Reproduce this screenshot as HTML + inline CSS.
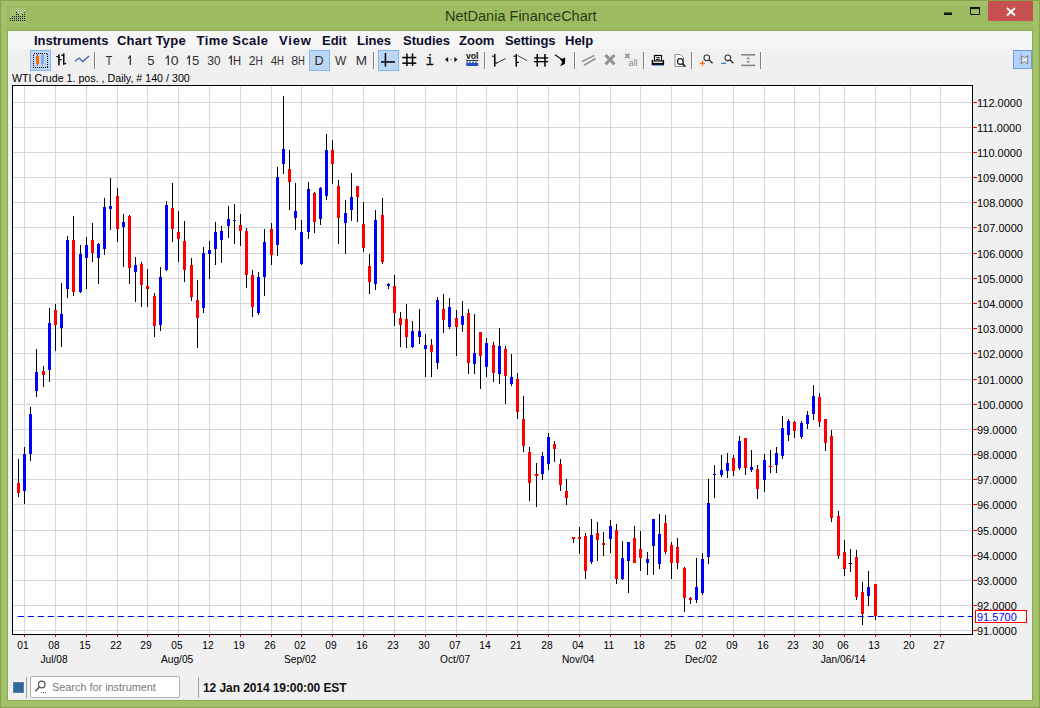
<!DOCTYPE html>
<html><head><meta charset="utf-8"><title>NetDania FinanceChart</title>
<style>
*{box-sizing:border-box;margin:0;padding:0}
html,body{width:1040px;height:708px;overflow:hidden}
body{background:#9dbb61;font-family:"Liberation Sans",sans-serif;position:relative}
.abs{position:absolute}
#win{position:absolute;left:0;top:0;width:1040px;height:708px;background:#9dbb61}
#title{position:absolute;left:444.5px;top:5.6px;white-space:nowrap;font-size:15.5px;color:rgba(10,20,0,.82);line-height:20px;transform:scaleX(.936);transform-origin:0 0}
#content{position:absolute;left:8px;top:31px;width:1024px;height:669px;background:#f0f0f0}
#menubar{position:absolute;left:0;top:0;width:1024px;height:18px;background:#f6f6f6}
.mi{position:absolute;top:2px;margin-top:-0.5px;font-weight:bold;font-size:13px;line-height:15px;color:#0b0b2a;white-space:nowrap}
.tb{position:absolute;top:52px;height:16px;line-height:16px;font-size:13px;color:#2a2a2a;text-align:center;width:21px;white-space:nowrap}
.tb span{display:inline-block;transform:scaleX(.9)}
.sel{position:absolute;top:50px;height:21px;width:21px;background:#bbd7f5;border:1px solid #84b5ec}
.sep{position:absolute;top:52px;height:17px;width:1px;background:#808080;box-shadow:1px 0 0 rgba(255,255,255,.7)}
#lbl{position:absolute;left:12px;top:72px;font-size:11.5px;line-height:13px;transform:scaleX(.928);transform-origin:0 0;color:#000;white-space:nowrap}
svg text.tbt{font-family:"Liberation Sans",sans-serif;font-size:13.6px;fill:#303030}
svg path.tbp{fill:#303030}
svg text.ax{font-family:"Liberation Sans",sans-serif;font-size:11px;fill:#000}
svg text.bx{font-size:10.2px}
#chart{position:absolute;left:0;top:0}
#icons{position:absolute;left:0;top:0}
#search{position:absolute;left:30px;top:676px;width:150px;height:22px;background:#fff;border:1px solid #b4b4b4;border-radius:2px}
#search span{position:absolute;left:20.5px;top:3px;font-size:11.5px;line-height:14px;color:#7a7a7a;white-space:nowrap;transform:scaleX(.945);transform-origin:0 0}
#dt{position:absolute;left:203px;top:680.5px;letter-spacing:-.08px;font-size:12px;line-height:14px;font-weight:bold;color:#111;white-space:nowrap}
</style></head><body>
<div id="win"></div>
<svg class="abs" style="left:0;top:0" width="1040" height="708" viewBox="0 0 1040 708"><rect x="0.5" y="0.5" width="1039" height="707" fill="none" stroke="#86a352" stroke-width="1"/>
<path d="M1 1H1039V707H1Z M7 6H1033V701H7Z" fill="#a3c169" fill-rule="evenodd"/><path d="M7 6H1033V31H7Z" fill="#9dbb61"/>
<rect x="7.5" y="30.5" width="1025" height="670" fill="none" stroke="#8dab57" stroke-width="1"/>
</svg>
<div id="title">NetDania FinanceChart</div>
<div id="content"><div id="menubar"></div></div>
<!-- menu -->
<div class="mi" style="left:34px;top:33px">Instruments</div>
<div class="mi" style="left:117px;top:33px;letter-spacing:.19px">Chart Type</div>
<div class="mi" style="left:196.5px;top:33px;letter-spacing:.42px">Time Scale</div>
<div class="mi" style="left:279px;top:33px;letter-spacing:.8px">View</div>
<div class="mi" style="left:322px;top:33px">Edit</div>
<div class="mi" style="left:357px;top:33px">Lines</div>
<div class="mi" style="left:403px;top:33px">Studies</div>
<div class="mi" style="left:459px;top:33px">Zoom</div>
<div class="mi" style="left:505px;top:33px;letter-spacing:-.12px">Settings</div>
<div class="mi" style="left:565px;top:33px">Help</div>
<!-- toolbar selections -->
<div class="sel" style="left:30px"></div>
<div class="sel" style="left:309px"></div>
<div class="sel" style="left:378px"></div>
<div class="sel" style="left:1013px;width:19px;height:19px;background:#b3d4f8;border-color:#6b9fdf"></div>
<!-- toolbar text -->
<div class="sep" style="left:94px"></div>
<div class="sep" style="left:373px"></div>
<div class="sep" style="left:484px"></div>
<div class="sep" style="left:574px"></div>
<div class="sep" style="left:643px"></div>
<div class="sep" style="left:691px"></div>
<div class="sep" style="left:760px"></div>
<div id="lbl">WTI Crude 1. pos. , Daily, # 140 / 300</div>
<svg id="chart" width="1040" height="708" viewBox="0 0 1040 708" shape-rendering="crispEdges"><rect x="13" y="86" width="959" height="548" fill="#fff"/>
<rect x="13" y="102" width="959" height="1" fill="#d6d6d6"/>
<rect x="13" y="127" width="959" height="1" fill="#d6d6d6"/>
<rect x="13" y="152" width="959" height="1" fill="#d6d6d6"/>
<rect x="13" y="177" width="959" height="1" fill="#d6d6d6"/>
<rect x="13" y="202" width="959" height="1" fill="#d6d6d6"/>
<rect x="13" y="227" width="959" height="1" fill="#d6d6d6"/>
<rect x="13" y="253" width="959" height="1" fill="#d6d6d6"/>
<rect x="13" y="278" width="959" height="1" fill="#d6d6d6"/>
<rect x="13" y="303" width="959" height="1" fill="#d6d6d6"/>
<rect x="13" y="328" width="959" height="1" fill="#d6d6d6"/>
<rect x="13" y="353" width="959" height="1" fill="#d6d6d6"/>
<rect x="13" y="379" width="959" height="1" fill="#d6d6d6"/>
<rect x="13" y="404" width="959" height="1" fill="#d6d6d6"/>
<rect x="13" y="429" width="959" height="1" fill="#d6d6d6"/>
<rect x="13" y="454" width="959" height="1" fill="#d6d6d6"/>
<rect x="13" y="479" width="959" height="1" fill="#d6d6d6"/>
<rect x="13" y="504" width="959" height="1" fill="#d6d6d6"/>
<rect x="13" y="530" width="959" height="1" fill="#d6d6d6"/>
<rect x="13" y="555" width="959" height="1" fill="#d6d6d6"/>
<rect x="13" y="580" width="959" height="1" fill="#d6d6d6"/>
<rect x="13" y="605" width="959" height="1" fill="#d6d6d6"/>
<rect x="13" y="630" width="959" height="1" fill="#d6d6d6"/>
<rect x="24" y="86" width="1" height="548" fill="#d6d6d6"/>
<rect x="55" y="86" width="1" height="548" fill="#d6d6d6"/>
<rect x="86" y="86" width="1" height="548" fill="#d6d6d6"/>
<rect x="117" y="86" width="1" height="548" fill="#d6d6d6"/>
<rect x="147" y="86" width="1" height="548" fill="#d6d6d6"/>
<rect x="178" y="86" width="1" height="548" fill="#d6d6d6"/>
<rect x="209" y="86" width="1" height="548" fill="#d6d6d6"/>
<rect x="240" y="86" width="1" height="548" fill="#d6d6d6"/>
<rect x="271" y="86" width="1" height="548" fill="#d6d6d6"/>
<rect x="301" y="86" width="1" height="548" fill="#d6d6d6"/>
<rect x="332" y="86" width="1" height="548" fill="#d6d6d6"/>
<rect x="363" y="86" width="1" height="548" fill="#d6d6d6"/>
<rect x="394" y="86" width="1" height="548" fill="#d6d6d6"/>
<rect x="425" y="86" width="1" height="548" fill="#d6d6d6"/>
<rect x="456" y="86" width="1" height="548" fill="#d6d6d6"/>
<rect x="486" y="86" width="1" height="548" fill="#d6d6d6"/>
<rect x="517" y="86" width="1" height="548" fill="#d6d6d6"/>
<rect x="548" y="86" width="1" height="548" fill="#d6d6d6"/>
<rect x="579" y="86" width="1" height="548" fill="#d6d6d6"/>
<rect x="610" y="86" width="1" height="548" fill="#d6d6d6"/>
<rect x="640" y="86" width="1" height="548" fill="#d6d6d6"/>
<rect x="671" y="86" width="1" height="548" fill="#d6d6d6"/>
<rect x="702" y="86" width="1" height="548" fill="#d6d6d6"/>
<rect x="733" y="86" width="1" height="548" fill="#d6d6d6"/>
<rect x="764" y="86" width="1" height="548" fill="#d6d6d6"/>
<rect x="794" y="86" width="1" height="548" fill="#d6d6d6"/>
<rect x="819" y="86" width="1" height="548" fill="#d6d6d6"/>
<rect x="844" y="86" width="1" height="548" fill="#d6d6d6"/>
<rect x="875" y="86" width="1" height="548" fill="#d6d6d6"/>
<rect x="910" y="86" width="1" height="548" fill="#d6d6d6"/>
<rect x="940" y="86" width="1" height="548" fill="#d6d6d6"/>
<g shape-rendering="auto"><rect x="17.70" y="616" width="6.20" height="1" fill="#0000ff"/><rect x="27.70" y="616" width="6.20" height="1" fill="#0000ff"/><rect x="37.70" y="616" width="6.20" height="1" fill="#0000ff"/><rect x="47.70" y="616" width="6.20" height="1" fill="#0000ff"/><rect x="57.70" y="616" width="6.20" height="1" fill="#0000ff"/><rect x="67.70" y="616" width="6.20" height="1" fill="#0000ff"/><rect x="77.70" y="616" width="6.20" height="1" fill="#0000ff"/><rect x="87.70" y="616" width="6.20" height="1" fill="#0000ff"/><rect x="97.70" y="616" width="6.20" height="1" fill="#0000ff"/><rect x="107.70" y="616" width="6.20" height="1" fill="#0000ff"/><rect x="117.70" y="616" width="6.20" height="1" fill="#0000ff"/><rect x="127.70" y="616" width="6.20" height="1" fill="#0000ff"/><rect x="137.70" y="616" width="6.20" height="1" fill="#0000ff"/><rect x="147.70" y="616" width="6.20" height="1" fill="#0000ff"/><rect x="157.70" y="616" width="6.20" height="1" fill="#0000ff"/><rect x="167.70" y="616" width="6.20" height="1" fill="#0000ff"/><rect x="177.70" y="616" width="6.20" height="1" fill="#0000ff"/><rect x="187.70" y="616" width="6.20" height="1" fill="#0000ff"/><rect x="197.70" y="616" width="6.20" height="1" fill="#0000ff"/><rect x="207.70" y="616" width="6.20" height="1" fill="#0000ff"/><rect x="217.70" y="616" width="6.20" height="1" fill="#0000ff"/><rect x="227.70" y="616" width="6.20" height="1" fill="#0000ff"/><rect x="237.70" y="616" width="6.20" height="1" fill="#0000ff"/><rect x="247.70" y="616" width="6.20" height="1" fill="#0000ff"/><rect x="257.70" y="616" width="6.20" height="1" fill="#0000ff"/><rect x="267.70" y="616" width="6.20" height="1" fill="#0000ff"/><rect x="277.70" y="616" width="6.20" height="1" fill="#0000ff"/><rect x="287.70" y="616" width="6.20" height="1" fill="#0000ff"/><rect x="297.70" y="616" width="6.20" height="1" fill="#0000ff"/><rect x="307.70" y="616" width="6.20" height="1" fill="#0000ff"/><rect x="317.70" y="616" width="6.20" height="1" fill="#0000ff"/><rect x="327.70" y="616" width="6.20" height="1" fill="#0000ff"/><rect x="337.70" y="616" width="6.20" height="1" fill="#0000ff"/><rect x="347.70" y="616" width="6.20" height="1" fill="#0000ff"/><rect x="357.70" y="616" width="6.20" height="1" fill="#0000ff"/><rect x="367.70" y="616" width="6.20" height="1" fill="#0000ff"/><rect x="377.70" y="616" width="6.20" height="1" fill="#0000ff"/><rect x="387.70" y="616" width="6.20" height="1" fill="#0000ff"/><rect x="397.70" y="616" width="6.20" height="1" fill="#0000ff"/><rect x="407.70" y="616" width="6.20" height="1" fill="#0000ff"/><rect x="417.70" y="616" width="6.20" height="1" fill="#0000ff"/><rect x="427.70" y="616" width="6.20" height="1" fill="#0000ff"/><rect x="437.70" y="616" width="6.20" height="1" fill="#0000ff"/><rect x="447.70" y="616" width="6.20" height="1" fill="#0000ff"/><rect x="457.70" y="616" width="6.20" height="1" fill="#0000ff"/><rect x="467.70" y="616" width="6.20" height="1" fill="#0000ff"/><rect x="477.70" y="616" width="6.20" height="1" fill="#0000ff"/><rect x="487.70" y="616" width="6.20" height="1" fill="#0000ff"/><rect x="497.70" y="616" width="6.20" height="1" fill="#0000ff"/><rect x="507.70" y="616" width="6.20" height="1" fill="#0000ff"/><rect x="517.70" y="616" width="6.20" height="1" fill="#0000ff"/><rect x="527.70" y="616" width="6.20" height="1" fill="#0000ff"/><rect x="537.70" y="616" width="6.20" height="1" fill="#0000ff"/><rect x="547.70" y="616" width="6.20" height="1" fill="#0000ff"/><rect x="557.70" y="616" width="6.20" height="1" fill="#0000ff"/><rect x="567.70" y="616" width="6.20" height="1" fill="#0000ff"/><rect x="577.70" y="616" width="6.20" height="1" fill="#0000ff"/><rect x="587.70" y="616" width="6.20" height="1" fill="#0000ff"/><rect x="597.70" y="616" width="6.20" height="1" fill="#0000ff"/><rect x="607.70" y="616" width="6.20" height="1" fill="#0000ff"/><rect x="617.70" y="616" width="6.20" height="1" fill="#0000ff"/><rect x="627.70" y="616" width="6.20" height="1" fill="#0000ff"/><rect x="637.70" y="616" width="6.20" height="1" fill="#0000ff"/><rect x="647.70" y="616" width="6.20" height="1" fill="#0000ff"/><rect x="657.70" y="616" width="6.20" height="1" fill="#0000ff"/><rect x="667.70" y="616" width="6.20" height="1" fill="#0000ff"/><rect x="677.70" y="616" width="6.20" height="1" fill="#0000ff"/><rect x="687.70" y="616" width="6.20" height="1" fill="#0000ff"/><rect x="697.70" y="616" width="6.20" height="1" fill="#0000ff"/><rect x="707.70" y="616" width="6.20" height="1" fill="#0000ff"/><rect x="717.70" y="616" width="6.20" height="1" fill="#0000ff"/><rect x="727.70" y="616" width="6.20" height="1" fill="#0000ff"/><rect x="737.70" y="616" width="6.20" height="1" fill="#0000ff"/><rect x="747.70" y="616" width="6.20" height="1" fill="#0000ff"/><rect x="757.70" y="616" width="6.20" height="1" fill="#0000ff"/><rect x="767.70" y="616" width="6.20" height="1" fill="#0000ff"/><rect x="777.70" y="616" width="6.20" height="1" fill="#0000ff"/><rect x="787.70" y="616" width="6.20" height="1" fill="#0000ff"/><rect x="797.70" y="616" width="6.20" height="1" fill="#0000ff"/><rect x="807.70" y="616" width="6.20" height="1" fill="#0000ff"/><rect x="817.70" y="616" width="6.20" height="1" fill="#0000ff"/><rect x="827.70" y="616" width="6.20" height="1" fill="#0000ff"/><rect x="837.70" y="616" width="6.20" height="1" fill="#0000ff"/><rect x="847.70" y="616" width="6.20" height="1" fill="#0000ff"/><rect x="857.70" y="616" width="6.20" height="1" fill="#0000ff"/><rect x="867.70" y="616" width="6.20" height="1" fill="#0000ff"/><rect x="877.70" y="616" width="6.20" height="1" fill="#0000ff"/><rect x="887.70" y="616" width="6.20" height="1" fill="#0000ff"/><rect x="897.70" y="616" width="6.20" height="1" fill="#0000ff"/><rect x="907.70" y="616" width="6.20" height="1" fill="#0000ff"/><rect x="917.70" y="616" width="6.20" height="1" fill="#0000ff"/><rect x="927.70" y="616" width="6.20" height="1" fill="#0000ff"/><rect x="937.70" y="616" width="6.20" height="1" fill="#0000ff"/><rect x="947.70" y="616" width="6.20" height="1" fill="#0000ff"/><rect x="957.70" y="616" width="6.20" height="1" fill="#0000ff"/><rect x="967.70" y="616" width="4.30" height="1" fill="#0000ff"/></g>
<rect x="18" y="459" width="1" height="38" fill="#000"/>
<rect x="17" y="483" width="3" height="10" fill="#ff0000"/>
<rect x="24" y="447" width="1" height="57" fill="#000"/>
<rect x="23" y="454" width="3" height="37" fill="#0000ff"/>
<rect x="30" y="407" width="1" height="54" fill="#000"/>
<rect x="29" y="414" width="3" height="40" fill="#0000ff"/>
<rect x="36" y="349" width="1" height="48" fill="#000"/>
<rect x="35" y="372" width="3" height="19" fill="#0000ff"/>
<rect x="43" y="366" width="1" height="21" fill="#000"/>
<rect x="42" y="371" width="3" height="4" fill="#ff0000"/>
<rect x="49" y="308" width="1" height="74" fill="#000"/>
<rect x="48" y="323" width="3" height="47" fill="#0000ff"/>
<rect x="55" y="304" width="1" height="47" fill="#000"/>
<rect x="54" y="310" width="3" height="15" fill="#ff0000"/>
<rect x="61" y="283" width="1" height="64" fill="#000"/>
<rect x="60" y="314" width="3" height="14" fill="#0000ff"/>
<rect x="67" y="236" width="1" height="62" fill="#000"/>
<rect x="66" y="240" width="3" height="49" fill="#0000ff"/>
<rect x="73" y="216" width="1" height="80" fill="#000"/>
<rect x="72" y="240" width="3" height="52" fill="#ff0000"/>
<rect x="80" y="245" width="1" height="48" fill="#000"/>
<rect x="79" y="254" width="3" height="38" fill="#0000ff"/>
<rect x="86" y="237" width="1" height="52" fill="#000"/>
<rect x="85" y="245" width="3" height="13" fill="#0000ff"/>
<rect x="92" y="223" width="1" height="39" fill="#000"/>
<rect x="91" y="240" width="3" height="13" fill="#ff0000"/>
<rect x="98" y="243" width="1" height="41" fill="#000"/>
<rect x="97" y="244" width="3" height="14" fill="#0000ff"/>
<rect x="104" y="198" width="1" height="57" fill="#000"/>
<rect x="103" y="207" width="3" height="42" fill="#0000ff"/>
<rect x="110" y="178" width="1" height="52" fill="#000"/>
<rect x="109" y="206" width="3" height="3" fill="#0000ff"/>
<rect x="117" y="188" width="1" height="54" fill="#000"/>
<rect x="116" y="196" width="3" height="33" fill="#ff0000"/>
<rect x="123" y="214" width="1" height="53" fill="#000"/>
<rect x="122" y="222" width="3" height="5" fill="#0000ff"/>
<rect x="129" y="215" width="1" height="69" fill="#000"/>
<rect x="128" y="216" width="3" height="52" fill="#ff0000"/>
<rect x="135" y="257" width="1" height="45" fill="#000"/>
<rect x="134" y="265" width="3" height="7" fill="#0000ff"/>
<rect x="141" y="262" width="1" height="45" fill="#000"/>
<rect x="140" y="264" width="3" height="21" fill="#ff0000"/>
<rect x="147" y="269" width="1" height="38" fill="#000"/>
<rect x="146" y="286" width="3" height="3" fill="#ff0000"/>
<rect x="154" y="293" width="1" height="44" fill="#000"/>
<rect x="153" y="296" width="3" height="30" fill="#ff0000"/>
<rect x="160" y="267" width="1" height="64" fill="#000"/>
<rect x="159" y="277" width="3" height="48" fill="#0000ff"/>
<rect x="166" y="201" width="1" height="70" fill="#000"/>
<rect x="165" y="205" width="3" height="65" fill="#0000ff"/>
<rect x="172" y="183" width="1" height="59" fill="#000"/>
<rect x="171" y="208" width="3" height="21" fill="#ff0000"/>
<rect x="178" y="211" width="1" height="51" fill="#000"/>
<rect x="177" y="232" width="3" height="7" fill="#ff0000"/>
<rect x="184" y="221" width="1" height="61" fill="#000"/>
<rect x="183" y="241" width="3" height="29" fill="#ff0000"/>
<rect x="191" y="258" width="1" height="43" fill="#000"/>
<rect x="190" y="265" width="3" height="32" fill="#ff0000"/>
<rect x="197" y="280" width="1" height="68" fill="#000"/>
<rect x="196" y="300" width="3" height="18" fill="#ff0000"/>
<rect x="203" y="247" width="1" height="66" fill="#000"/>
<rect x="202" y="253" width="3" height="55" fill="#0000ff"/>
<rect x="209" y="241" width="1" height="38" fill="#000"/>
<rect x="208" y="250" width="3" height="4" fill="#0000ff"/>
<rect x="215" y="222" width="1" height="43" fill="#000"/>
<rect x="214" y="232" width="3" height="17" fill="#0000ff"/>
<rect x="221" y="226" width="1" height="37" fill="#000"/>
<rect x="220" y="231" width="3" height="9" fill="#0000ff"/>
<rect x="228" y="206" width="1" height="32" fill="#000"/>
<rect x="227" y="219" width="3" height="7" fill="#0000ff"/>
<rect x="234" y="204" width="1" height="40" fill="#000"/>
<rect x="233" y="220" width="3" height="1" fill="#0000ff"/>
<rect x="240" y="214" width="1" height="32" fill="#000"/>
<rect x="239" y="225" width="3" height="6" fill="#ff0000"/>
<rect x="246" y="228" width="1" height="60" fill="#000"/>
<rect x="245" y="231" width="3" height="44" fill="#ff0000"/>
<rect x="252" y="270" width="1" height="47" fill="#000"/>
<rect x="251" y="275" width="3" height="32" fill="#ff0000"/>
<rect x="258" y="272" width="1" height="43" fill="#000"/>
<rect x="257" y="277" width="3" height="36" fill="#0000ff"/>
<rect x="264" y="229" width="1" height="67" fill="#000"/>
<rect x="263" y="242" width="3" height="35" fill="#0000ff"/>
<rect x="271" y="223" width="1" height="42" fill="#000"/>
<rect x="270" y="229" width="3" height="26" fill="#ff0000"/>
<rect x="277" y="167" width="1" height="89" fill="#000"/>
<rect x="276" y="177" width="3" height="68" fill="#0000ff"/>
<rect x="283" y="96" width="1" height="78" fill="#000"/>
<rect x="282" y="149" width="3" height="15" fill="#0000ff"/>
<rect x="289" y="150" width="1" height="60" fill="#000"/>
<rect x="288" y="169" width="3" height="13" fill="#ff0000"/>
<rect x="295" y="183" width="1" height="47" fill="#000"/>
<rect x="294" y="211" width="3" height="7" fill="#0000ff"/>
<rect x="301" y="220" width="1" height="45" fill="#000"/>
<rect x="300" y="232" width="3" height="32" fill="#0000ff"/>
<rect x="308" y="182" width="1" height="57" fill="#000"/>
<rect x="307" y="189" width="3" height="43" fill="#0000ff"/>
<rect x="314" y="192" width="1" height="41" fill="#000"/>
<rect x="313" y="193" width="3" height="29" fill="#ff0000"/>
<rect x="320" y="187" width="1" height="38" fill="#000"/>
<rect x="319" y="188" width="3" height="31" fill="#0000ff"/>
<rect x="326" y="134" width="1" height="66" fill="#000"/>
<rect x="325" y="150" width="3" height="46" fill="#0000ff"/>
<rect x="332" y="140" width="1" height="44" fill="#000"/>
<rect x="331" y="150" width="3" height="14" fill="#ff0000"/>
<rect x="338" y="180" width="1" height="64" fill="#000"/>
<rect x="337" y="186" width="3" height="32" fill="#ff0000"/>
<rect x="345" y="200" width="1" height="54" fill="#000"/>
<rect x="344" y="213" width="3" height="10" fill="#0000ff"/>
<rect x="351" y="173" width="1" height="48" fill="#000"/>
<rect x="350" y="197" width="3" height="13" fill="#0000ff"/>
<rect x="357" y="186" width="1" height="36" fill="#000"/>
<rect x="356" y="186" width="3" height="11" fill="#ff0000"/>
<rect x="363" y="202" width="1" height="50" fill="#000"/>
<rect x="362" y="224" width="3" height="24" fill="#ff0000"/>
<rect x="369" y="254" width="1" height="40" fill="#000"/>
<rect x="368" y="266" width="3" height="16" fill="#ff0000"/>
<rect x="375" y="210" width="1" height="80" fill="#000"/>
<rect x="374" y="220" width="3" height="64" fill="#0000ff"/>
<rect x="382" y="198" width="1" height="66" fill="#000"/>
<rect x="381" y="215" width="3" height="47" fill="#ff0000"/>
<rect x="388" y="283" width="1" height="6" fill="#000"/>
<rect x="387" y="284" width="3" height="2" fill="#0000ff"/>
<rect x="394" y="275" width="1" height="51" fill="#000"/>
<rect x="393" y="286" width="3" height="27" fill="#ff0000"/>
<rect x="400" y="312" width="1" height="35" fill="#000"/>
<rect x="399" y="318" width="3" height="7" fill="#ff0000"/>
<rect x="406" y="304" width="1" height="44" fill="#000"/>
<rect x="405" y="319" width="3" height="18" fill="#ff0000"/>
<rect x="412" y="321" width="1" height="27" fill="#000"/>
<rect x="411" y="331" width="3" height="16" fill="#0000ff"/>
<rect x="419" y="309" width="1" height="35" fill="#000"/>
<rect x="418" y="331" width="3" height="6" fill="#0000ff"/>
<rect x="425" y="334" width="1" height="43" fill="#000"/>
<rect x="424" y="345" width="3" height="4" fill="#0000ff"/>
<rect x="431" y="339" width="1" height="38" fill="#000"/>
<rect x="430" y="345" width="3" height="7" fill="#ff0000"/>
<rect x="437" y="297" width="1" height="72" fill="#000"/>
<rect x="436" y="300" width="3" height="63" fill="#0000ff"/>
<rect x="443" y="294" width="1" height="39" fill="#000"/>
<rect x="442" y="309" width="3" height="11" fill="#ff0000"/>
<rect x="449" y="298" width="1" height="31" fill="#000"/>
<rect x="448" y="307" width="3" height="20" fill="#0000ff"/>
<rect x="456" y="310" width="1" height="46" fill="#000"/>
<rect x="455" y="318" width="3" height="9" fill="#ff0000"/>
<rect x="462" y="301" width="1" height="31" fill="#000"/>
<rect x="461" y="316" width="3" height="9" fill="#0000ff"/>
<rect x="468" y="309" width="1" height="65" fill="#000"/>
<rect x="467" y="313" width="3" height="50" fill="#ff0000"/>
<rect x="474" y="314" width="1" height="60" fill="#000"/>
<rect x="473" y="353" width="3" height="11" fill="#0000ff"/>
<rect x="480" y="332" width="1" height="57" fill="#000"/>
<rect x="479" y="332" width="3" height="24" fill="#ff0000"/>
<rect x="486" y="338" width="1" height="39" fill="#000"/>
<rect x="485" y="343" width="3" height="24" fill="#0000ff"/>
<rect x="493" y="342" width="1" height="40" fill="#000"/>
<rect x="492" y="345" width="3" height="28" fill="#ff0000"/>
<rect x="499" y="328" width="1" height="56" fill="#000"/>
<rect x="498" y="346" width="3" height="28" fill="#0000ff"/>
<rect x="505" y="346" width="1" height="58" fill="#000"/>
<rect x="504" y="349" width="3" height="27" fill="#ff0000"/>
<rect x="511" y="354" width="1" height="32" fill="#000"/>
<rect x="510" y="377" width="3" height="7" fill="#0000ff"/>
<rect x="517" y="373" width="1" height="46" fill="#000"/>
<rect x="516" y="379" width="3" height="33" fill="#ff0000"/>
<rect x="523" y="396" width="1" height="56" fill="#000"/>
<rect x="522" y="419" width="3" height="27" fill="#ff0000"/>
<rect x="529" y="447" width="1" height="54" fill="#000"/>
<rect x="528" y="452" width="3" height="31" fill="#ff0000"/>
<rect x="536" y="463" width="1" height="44" fill="#000"/>
<rect x="534" y="474" width="5" height="2" fill="#ff0000" opacity=".35"/><rect x="535" y="474" width="3" height="2" fill="#ff0000"/>
<rect x="542" y="452" width="1" height="28" fill="#000"/>
<rect x="541" y="456" width="3" height="18" fill="#0000ff"/>
<rect x="548" y="433" width="1" height="37" fill="#000"/>
<rect x="547" y="437" width="3" height="27" fill="#0000ff"/>
<rect x="554" y="441" width="1" height="21" fill="#000"/>
<rect x="553" y="444" width="3" height="5" fill="#ff0000"/>
<rect x="560" y="459" width="1" height="32" fill="#000"/>
<rect x="559" y="464" width="3" height="21" fill="#ff0000"/>
<rect x="566" y="479" width="1" height="26" fill="#000"/>
<rect x="565" y="491" width="3" height="7" fill="#ff0000"/>
<rect x="573" y="537" width="1" height="6" fill="#000"/>
<rect x="572" y="537" width="3" height="2" fill="#ff0000"/>
<rect x="579" y="527" width="1" height="27" fill="#000"/>
<rect x="578" y="537" width="3" height="2" fill="#ff0000"/>
<rect x="585" y="533" width="1" height="46" fill="#000"/>
<rect x="584" y="536" width="3" height="35" fill="#ff0000"/>
<rect x="591" y="519" width="1" height="45" fill="#000"/>
<rect x="590" y="535" width="3" height="27" fill="#0000ff"/>
<rect x="597" y="522" width="1" height="39" fill="#000"/>
<rect x="596" y="533" width="3" height="7" fill="#ff0000"/>
<rect x="603" y="532" width="1" height="24" fill="#000"/>
<rect x="602" y="543" width="3" height="2" fill="#ff0000"/>
<rect x="610" y="520" width="1" height="33" fill="#000"/>
<rect x="609" y="526" width="3" height="13" fill="#0000ff"/>
<rect x="616" y="524" width="1" height="60" fill="#000"/>
<rect x="615" y="530" width="3" height="49" fill="#ff0000"/>
<rect x="622" y="541" width="1" height="39" fill="#000"/>
<rect x="621" y="558" width="3" height="21" fill="#0000ff"/>
<rect x="628" y="542" width="1" height="51" fill="#000"/>
<rect x="627" y="542" width="3" height="19" fill="#0000ff"/>
<rect x="634" y="526" width="1" height="37" fill="#000"/>
<rect x="633" y="538" width="3" height="25" fill="#ff0000"/>
<rect x="640" y="531" width="1" height="40" fill="#000"/>
<rect x="639" y="549" width="3" height="9" fill="#ff0000"/>
<rect x="647" y="552" width="1" height="23" fill="#000"/>
<rect x="646" y="559" width="3" height="4" fill="#0000ff"/>
<rect x="653" y="519" width="1" height="56" fill="#000"/>
<rect x="652" y="519" width="3" height="27" fill="#0000ff"/>
<rect x="659" y="514" width="1" height="55" fill="#000"/>
<rect x="658" y="534" width="3" height="30" fill="#0000ff"/>
<rect x="665" y="515" width="1" height="39" fill="#000"/>
<rect x="664" y="523" width="3" height="29" fill="#ff0000"/>
<rect x="671" y="542" width="1" height="37" fill="#000"/>
<rect x="670" y="545" width="3" height="18" fill="#ff0000"/>
<rect x="677" y="538" width="1" height="31" fill="#000"/>
<rect x="676" y="547" width="3" height="16" fill="#ff0000"/>
<rect x="684" y="567" width="1" height="45" fill="#000"/>
<rect x="683" y="568" width="3" height="30" fill="#ff0000"/>
<rect x="690" y="597" width="1" height="7" fill="#000"/>
<rect x="689" y="598" width="3" height="2" fill="#ff0000"/>
<rect x="696" y="558" width="1" height="45" fill="#000"/>
<rect x="695" y="587" width="3" height="13" fill="#0000ff"/>
<rect x="702" y="553" width="1" height="42" fill="#000"/>
<rect x="701" y="559" width="3" height="34" fill="#0000ff"/>
<rect x="708" y="479" width="1" height="85" fill="#000"/>
<rect x="707" y="503" width="3" height="54" fill="#0000ff"/>
<rect x="714" y="465" width="1" height="33" fill="#000"/>
<rect x="713" y="474" width="3" height="1" fill="#0000ff"/>
<rect x="721" y="455" width="1" height="22" fill="#000"/>
<rect x="720" y="470" width="3" height="5" fill="#0000ff"/>
<rect x="727" y="453" width="1" height="25" fill="#000"/>
<rect x="726" y="463" width="3" height="8" fill="#0000ff"/>
<rect x="733" y="455" width="1" height="21" fill="#000"/>
<rect x="732" y="458" width="3" height="13" fill="#ff0000"/>
<rect x="739" y="436" width="1" height="34" fill="#000"/>
<rect x="738" y="441" width="3" height="27" fill="#0000ff"/>
<rect x="745" y="438" width="1" height="37" fill="#000"/>
<rect x="744" y="438" width="3" height="30" fill="#ff0000"/>
<rect x="751" y="450" width="1" height="22" fill="#000"/>
<rect x="750" y="467" width="3" height="3" fill="#0000ff"/>
<rect x="757" y="465" width="1" height="34" fill="#000"/>
<rect x="756" y="469" width="3" height="20" fill="#ff0000"/>
<rect x="764" y="454" width="1" height="38" fill="#000"/>
<rect x="763" y="460" width="3" height="20" fill="#0000ff"/>
<rect x="770" y="450" width="1" height="23" fill="#000"/>
<rect x="768" y="466" width="5" height="1" fill="#ff0000" opacity=".35"/><rect x="769" y="466" width="3" height="1" fill="#ff0000"/>
<rect x="776" y="447" width="1" height="26" fill="#000"/>
<rect x="775" y="453" width="3" height="12" fill="#0000ff"/>
<rect x="782" y="416" width="1" height="43" fill="#000"/>
<rect x="781" y="428" width="3" height="28" fill="#0000ff"/>
<rect x="788" y="419" width="1" height="22" fill="#000"/>
<rect x="787" y="421" width="3" height="14" fill="#0000ff"/>
<rect x="794" y="421" width="1" height="17" fill="#000"/>
<rect x="793" y="422" width="3" height="9" fill="#ff0000"/>
<rect x="801" y="421" width="1" height="18" fill="#000"/>
<rect x="800" y="423" width="3" height="14" fill="#0000ff"/>
<rect x="807" y="411" width="1" height="18" fill="#000"/>
<rect x="806" y="415" width="3" height="9" fill="#0000ff"/>
<rect x="813" y="385" width="1" height="35" fill="#000"/>
<rect x="812" y="396" width="3" height="18" fill="#0000ff"/>
<rect x="819" y="393" width="1" height="34" fill="#000"/>
<rect x="818" y="397" width="3" height="25" fill="#ff0000"/>
<rect x="825" y="419" width="1" height="32" fill="#000"/>
<rect x="824" y="419" width="3" height="24" fill="#ff0000"/>
<rect x="831" y="430" width="1" height="92" fill="#000"/>
<rect x="830" y="436" width="3" height="82" fill="#ff0000"/>
<rect x="838" y="511" width="1" height="48" fill="#000"/>
<rect x="837" y="516" width="3" height="40" fill="#ff0000"/>
<rect x="844" y="540" width="1" height="36" fill="#000"/>
<rect x="843" y="552" width="3" height="17" fill="#ff0000"/>
<rect x="850" y="549" width="1" height="23" fill="#000"/>
<rect x="848" y="563" width="5" height="1" fill="#000000" opacity=".35"/><rect x="849" y="563" width="3" height="1" fill="#000000"/>
<rect x="856" y="550" width="1" height="50" fill="#000"/>
<rect x="855" y="557" width="3" height="40" fill="#ff0000"/>
<rect x="862" y="582" width="1" height="43" fill="#000"/>
<rect x="861" y="592" width="3" height="22" fill="#ff0000"/>
<rect x="868" y="571" width="1" height="35" fill="#000"/>
<rect x="867" y="587" width="3" height="9" fill="#0000ff"/>
<rect x="875" y="584" width="1" height="36" fill="#000"/>
<rect x="874" y="584" width="3" height="32" fill="#ff0000"/>
<path d="M12.5 85.5H972.5V634.5H12.5Z" fill="none" stroke="#000" stroke-width="1.25"/>
<rect x="973" y="102" width="4" height="1" fill="#ff0000"/>
<text x="977" y="106.5" class="ax">112.0000</text>
<rect x="973" y="127" width="4" height="1" fill="#ff0000"/>
<text x="977" y="131.5" class="ax">111.0000</text>
<rect x="973" y="152" width="4" height="1" fill="#ff0000"/>
<text x="977" y="156.5" class="ax">110.0000</text>
<rect x="973" y="177" width="4" height="1" fill="#ff0000"/>
<text x="977" y="181.5" class="ax">109.0000</text>
<rect x="973" y="202" width="4" height="1" fill="#ff0000"/>
<text x="977" y="206.5" class="ax">108.0000</text>
<rect x="973" y="227" width="4" height="1" fill="#ff0000"/>
<text x="977" y="231.5" class="ax">107.0000</text>
<rect x="973" y="253" width="4" height="1" fill="#ff0000"/>
<text x="977" y="257.5" class="ax">106.0000</text>
<rect x="973" y="278" width="4" height="1" fill="#ff0000"/>
<text x="977" y="282.5" class="ax">105.0000</text>
<rect x="973" y="303" width="4" height="1" fill="#ff0000"/>
<text x="977" y="307.5" class="ax">104.0000</text>
<rect x="973" y="328" width="4" height="1" fill="#ff0000"/>
<text x="977" y="332.5" class="ax">103.0000</text>
<rect x="973" y="353" width="4" height="1" fill="#ff0000"/>
<text x="977" y="357.5" class="ax">102.0000</text>
<rect x="973" y="379" width="4" height="1" fill="#ff0000"/>
<text x="977" y="383.5" class="ax">101.0000</text>
<rect x="973" y="404" width="4" height="1" fill="#ff0000"/>
<text x="977" y="408.5" class="ax">100.0000</text>
<rect x="973" y="429" width="4" height="1" fill="#ff0000"/>
<text x="977" y="433.5" class="ax">99.0000</text>
<rect x="973" y="454" width="4" height="1" fill="#ff0000"/>
<text x="977" y="458.5" class="ax">98.0000</text>
<rect x="973" y="479" width="4" height="1" fill="#ff0000"/>
<text x="977" y="483.5" class="ax">97.0000</text>
<rect x="973" y="504" width="4" height="1" fill="#ff0000"/>
<text x="977" y="508.5" class="ax">96.0000</text>
<rect x="973" y="530" width="4" height="1" fill="#ff0000"/>
<text x="977" y="534.5" class="ax">95.0000</text>
<rect x="973" y="555" width="4" height="1" fill="#ff0000"/>
<text x="977" y="559.5" class="ax">94.0000</text>
<rect x="973" y="580" width="4" height="1" fill="#ff0000"/>
<text x="977" y="584.5" class="ax">93.0000</text>
<rect x="973" y="605" width="4" height="1" fill="#ff0000"/>
<text x="977" y="609.5" class="ax">92.0000</text>
<rect x="973" y="630" width="4" height="1" fill="#ff0000"/>
<text x="977" y="634.5" class="ax">91.0000</text>
<rect x="24" y="635" width="1" height="2" fill="#ff0000"/>
<text x="22.9" y="648.6" class="ax bx" text-anchor="middle">01</text>
<rect x="55" y="635" width="1" height="2" fill="#ff0000"/>
<text x="53.9" y="648.6" class="ax bx" text-anchor="middle">08</text>
<rect x="86" y="635" width="1" height="2" fill="#ff0000"/>
<text x="84.9" y="648.6" class="ax bx" text-anchor="middle">15</text>
<rect x="117" y="635" width="1" height="2" fill="#ff0000"/>
<text x="115.9" y="648.6" class="ax bx" text-anchor="middle">22</text>
<rect x="147" y="635" width="1" height="2" fill="#ff0000"/>
<text x="145.9" y="648.6" class="ax bx" text-anchor="middle">29</text>
<rect x="178" y="635" width="1" height="2" fill="#ff0000"/>
<text x="176.9" y="648.6" class="ax bx" text-anchor="middle">05</text>
<rect x="209" y="635" width="1" height="2" fill="#ff0000"/>
<text x="207.9" y="648.6" class="ax bx" text-anchor="middle">12</text>
<rect x="240" y="635" width="1" height="2" fill="#ff0000"/>
<text x="238.9" y="648.6" class="ax bx" text-anchor="middle">19</text>
<rect x="271" y="635" width="1" height="2" fill="#ff0000"/>
<text x="269.9" y="648.6" class="ax bx" text-anchor="middle">26</text>
<rect x="301" y="635" width="1" height="2" fill="#ff0000"/>
<text x="299.9" y="648.6" class="ax bx" text-anchor="middle">02</text>
<rect x="332" y="635" width="1" height="2" fill="#ff0000"/>
<text x="330.9" y="648.6" class="ax bx" text-anchor="middle">09</text>
<rect x="363" y="635" width="1" height="2" fill="#ff0000"/>
<text x="361.9" y="648.6" class="ax bx" text-anchor="middle">16</text>
<rect x="394" y="635" width="1" height="2" fill="#ff0000"/>
<text x="392.9" y="648.6" class="ax bx" text-anchor="middle">23</text>
<rect x="425" y="635" width="1" height="2" fill="#ff0000"/>
<text x="423.9" y="648.6" class="ax bx" text-anchor="middle">30</text>
<rect x="456" y="635" width="1" height="2" fill="#ff0000"/>
<text x="454.9" y="648.6" class="ax bx" text-anchor="middle">07</text>
<rect x="486" y="635" width="1" height="2" fill="#ff0000"/>
<text x="484.9" y="648.6" class="ax bx" text-anchor="middle">14</text>
<rect x="517" y="635" width="1" height="2" fill="#ff0000"/>
<text x="515.9" y="648.6" class="ax bx" text-anchor="middle">21</text>
<rect x="548" y="635" width="1" height="2" fill="#ff0000"/>
<text x="546.9" y="648.6" class="ax bx" text-anchor="middle">28</text>
<rect x="579" y="635" width="1" height="2" fill="#ff0000"/>
<text x="577.9" y="648.6" class="ax bx" text-anchor="middle">04</text>
<rect x="610" y="635" width="1" height="2" fill="#ff0000"/>
<text x="608.9" y="648.6" class="ax bx" text-anchor="middle">11</text>
<rect x="640" y="635" width="1" height="2" fill="#ff0000"/>
<text x="638.9" y="648.6" class="ax bx" text-anchor="middle">18</text>
<rect x="671" y="635" width="1" height="2" fill="#ff0000"/>
<text x="669.9" y="648.6" class="ax bx" text-anchor="middle">25</text>
<rect x="702" y="635" width="1" height="2" fill="#ff0000"/>
<text x="700.9" y="648.6" class="ax bx" text-anchor="middle">02</text>
<rect x="733" y="635" width="1" height="2" fill="#ff0000"/>
<text x="731.9" y="648.6" class="ax bx" text-anchor="middle">09</text>
<rect x="764" y="635" width="1" height="2" fill="#ff0000"/>
<text x="762.9" y="648.6" class="ax bx" text-anchor="middle">16</text>
<rect x="794" y="635" width="1" height="2" fill="#ff0000"/>
<text x="792.9" y="648.6" class="ax bx" text-anchor="middle">23</text>
<rect x="819" y="635" width="1" height="2" fill="#ff0000"/>
<text x="817.9" y="648.6" class="ax bx" text-anchor="middle">30</text>
<rect x="844" y="635" width="1" height="2" fill="#ff0000"/>
<text x="842.9" y="648.6" class="ax bx" text-anchor="middle">06</text>
<rect x="875" y="635" width="1" height="2" fill="#ff0000"/>
<text x="873.9" y="648.6" class="ax bx" text-anchor="middle">13</text>
<rect x="910" y="635" width="1" height="2" fill="#ff0000"/>
<text x="908.9" y="648.6" class="ax bx" text-anchor="middle">20</text>
<rect x="940" y="635" width="1" height="2" fill="#ff0000"/>
<text x="938.9" y="648.6" class="ax bx" text-anchor="middle">27</text>
<text x="54.1" y="663.4" class="ax bx" text-anchor="middle">Jul/08</text>
<text x="177.1" y="663.4" class="ax bx" text-anchor="middle">Aug/05</text>
<text x="300.1" y="663.4" class="ax bx" text-anchor="middle">Sep/02</text>
<text x="455.1" y="663.4" class="ax bx" text-anchor="middle">Oct/07</text>
<text x="578.1" y="663.4" class="ax bx" text-anchor="middle">Nov/04</text>
<text x="701.1" y="663.4" class="ax bx" text-anchor="middle">Dec/02</text>
<text x="843.1" y="663.4" class="ax bx" text-anchor="middle">Jan/06/14</text>
<rect x="975.5" y="610.5" width="51" height="12" fill="#fff" stroke="#ff0000" stroke-width="1"/>
<text x="977" y="620.5" class="ax" fill="#0000ff" style="fill:#0000ff">91.5700</text></svg>
<!-- status bar -->
<div class="abs" style="left:13px;top:682px;width:11px;height:11px;background:#336699;box-shadow:inset 0 0 0 1px rgba(255,255,255,.18)"></div>
<div class="abs" style="left:26px;top:677px;width:1px;height:21px;background:#a0a0a0"></div>
<div id="search"><span>Search for instrument</span></div>
<div class="abs" style="left:198px;top:677px;width:1px;height:21px;background:#a0a0a0"></div>
<div id="dt">12 Jan 2014 19:00:00 EST</div>
<svg id="icons" width="1040" height="708" viewBox="0 0 1040 708">
<!-- window frame shading -->
<!-- title icon -->
<g id="ticon" shape-rendering="crispEdges">
<rect x="10" y="8" width="1" height="1" fill="#b7cf8c"/><rect x="12" y="8" width="1" height="1" fill="#b7cf8c"/><rect x="14" y="8" width="1" height="1" fill="#b7cf8c"/><rect x="16" y="8" width="1" height="1" fill="#b7cf8c"/><rect x="18" y="8" width="1" height="1" fill="#b7cf8c"/><rect x="20" y="8" width="1" height="1" fill="#b7cf8c"/><rect x="22" y="8" width="1" height="1" fill="#b7cf8c"/><rect x="24" y="8" width="1" height="1" fill="#b7cf8c"/><rect x="10" y="10" width="1" height="1" fill="#b7cf8c"/><rect x="12" y="10" width="1" height="1" fill="#b7cf8c"/><rect x="14" y="10" width="1" height="1" fill="#b7cf8c"/><rect x="16" y="10" width="1" height="1" fill="#d9dcf2"/><rect x="18" y="10" width="1" height="1" fill="#d9dcf2"/><rect x="20" y="10" width="1" height="1" fill="#d9dcf2"/><rect x="22" y="10" width="1" height="1" fill="#d9dcf2"/><rect x="24" y="10" width="1" height="1" fill="#d9dcf2"/><rect x="10" y="12" width="1" height="1" fill="#b7cf8c"/><rect x="12" y="12" width="1" height="1" fill="#b7cf8c"/><rect x="14" y="12" width="1" height="1" fill="#b7cf8c"/><rect x="16" y="12" width="1" height="1" fill="#16162e"/><rect x="18" y="12" width="1" height="1" fill="#d9dcf2"/><rect x="20" y="12" width="1" height="1" fill="#d9dcf2"/><rect x="22" y="12" width="1" height="1" fill="#d9dcf2"/><rect x="24" y="12" width="1" height="1" fill="#444"/><rect x="10" y="14" width="1" height="1" fill="#b7cf8c"/><rect x="12" y="14" width="1" height="1" fill="#b7cf8c"/><rect x="14" y="14" width="1" height="1" fill="#b7cf8c"/><rect x="16" y="14" width="1" height="1" fill="#16162e"/><rect x="18" y="14" width="1" height="1" fill="#16162e"/><rect x="20" y="14" width="1" height="1" fill="#d9dcf2"/><rect x="22" y="14" width="1" height="1" fill="#16162e"/><rect x="24" y="14" width="1" height="1" fill="#16162e"/><rect x="10" y="16" width="1" height="1" fill="#b7cf8c"/><rect x="12" y="16" width="1" height="1" fill="#16162e"/><rect x="14" y="16" width="1" height="1" fill="#16162e"/><rect x="16" y="16" width="1" height="1" fill="#16162e"/><rect x="18" y="16" width="1" height="1" fill="#16162e"/><rect x="20" y="16" width="1" height="1" fill="#16162e"/><rect x="22" y="16" width="1" height="1" fill="#16162e"/><rect x="24" y="16" width="1" height="1" fill="#16162e"/><rect x="10" y="18" width="1" height="1" fill="#16162e"/><rect x="12" y="18" width="1" height="1" fill="#16162e"/><rect x="14" y="18" width="1" height="1" fill="#16162e"/><rect x="16" y="18" width="1" height="1" fill="#16162e"/><rect x="18" y="18" width="1" height="1" fill="#16162e"/><rect x="20" y="18" width="1" height="1" fill="#16162e"/><rect x="22" y="18" width="1" height="1" fill="#16162e"/><rect x="24" y="18" width="1" height="1" fill="#16162e"/><rect x="10" y="20" width="1" height="1" fill="#16162e"/><rect x="12" y="20" width="1" height="1" fill="#16162e"/><rect x="14" y="20" width="1" height="1" fill="#16162e"/><rect x="16" y="20" width="1" height="1" fill="#16162e"/><rect x="18" y="20" width="1" height="1" fill="#16162e"/><rect x="20" y="20" width="1" height="1" fill="#16162e"/><rect x="22" y="20" width="1" height="1" fill="#16162e"/><rect x="24" y="20" width="1" height="1" fill="#16162e"/><rect x="10" y="22" width="1" height="1" fill="#b7cf8c"/><rect x="12" y="22" width="1" height="1" fill="#b7cf8c"/><rect x="14" y="22" width="1" height="1" fill="#b7cf8c"/><rect x="16" y="22" width="1" height="1" fill="#b7cf8c"/><rect x="18" y="22" width="1" height="1" fill="#b7cf8c"/><rect x="20" y="22" width="1" height="1" fill="#b7cf8c"/><rect x="22" y="22" width="1" height="1" fill="#b7cf8c"/><rect x="24" y="22" width="1" height="1" fill="#b7cf8c"/>
</g>
<!-- window controls -->
<rect x="988" y="1" width="45" height="20" fill="#c75050"/>
<path d="M1007 8L1015 15.5M1015 8L1007 15.5" stroke="#fff" stroke-width="1.9" fill="none"/>
<rect x="944" y="12.5" width="8" height="2.5" fill="#151515"/>
<path d="M970.5 8H979.5V14.5H970.5Z" fill="none" stroke="#151515" stroke-width="1"/><rect x="970" y="7" width="10" height="2" fill="#151515"/>

<!-- btn1: candlestick (selected) -->
<g shape-rendering="crispEdges">
<path d="M33.5 53.5H47.5V67.5H33.5Z" fill="none" stroke="#000" stroke-width="1" stroke-dasharray="1 1"/>
<rect x="37" y="54" width="1" height="12" fill="#f0501a"/>
<rect x="36" y="56" width="3" height="8" fill="#ff6a00"/>
<rect x="42" y="54" width="1" height="12" fill="#7b9fd6"/>
<rect x="41" y="55" width="3" height="9" fill="#86a9de"/>
</g>
<!-- btn2: bars -->
<g fill="#000">
<rect x="58.2" y="54.4" width="1.5" height="11"/><rect x="56.3" y="56" width="2" height="1.2"/><rect x="59.6" y="59" width="2" height="1.2"/>
<rect x="63" y="53.4" width="1.5" height="11.4"/><rect x="61.2" y="54.6" width="2" height="1.2"/><rect x="64.3" y="63" width="1.9" height="1.2"/>
</g>
<!-- btn3: line -->
<path d="M75 61.2L79.1 58.1L82.8 61.5L89 56" fill="none" stroke="#3f5fb5" stroke-width="1.3"/>

<!-- crosshair (selected) -->
<rect x="384.7" y="53" width="1.5" height="13.6" fill="#000"/><rect x="381" y="61.2" width="14" height="1.5" fill="#000"/>
<!-- hash -->
<g fill="#000"><rect x="406.2" y="53.5" width="1.5" height="12.5"/><rect x="411.8" y="53.5" width="1.5" height="12.5"/><rect x="402.3" y="56.8" width="14" height="1.5"/><rect x="402.3" y="62.4" width="14" height="1.5"/></g>
<!-- i -->
<text x="425.6" y="64.8" font-family="Liberation Mono, monospace" font-size="14" fill="#111" stroke="#111" stroke-width="0.25">i</text>
<!-- arrows -->
<path d="M445 59.6L448.2 57V62.2Z" fill="#111"/><path d="M457.6 59.6L454.4 57V62.2Z" fill="#111"/><rect x="450.5" y="59" width="1.2" height="1.2" fill="#666"/>
<!-- vol -->
<text x="466" y="59.3" font-family="Liberation Sans, sans-serif" font-weight="bold" font-size="8.5" fill="#111" textLength="12.5" lengthAdjust="spacingAndGlyphs">vol</text>
<rect x="466" y="60" width="12.5" height="0.8" fill="#111"/>
<path d="M466.3 66V61.5H467.8V63H469.3V61.5H470.8V63H472.3V61.5H473.8V63H475.3V61.5H476.8V63H478.2V66Z" fill="#2a4fc0"/>

<!-- icon A -->
<g fill="#000"><rect x="494" y="54" width="1.5" height="12.6"/><rect x="492.3" y="55.6" width="2" height="1.2"/><rect x="495.3" y="62.4" width="2" height="1.2"/></g>
<path d="M497 62.8L505.6 58.5" stroke="#333" stroke-width="1" fill="none"/>
<!-- icon B -->
<g fill="#000"><rect x="515.5" y="54" width="1.5" height="12.6"/><rect x="513.5" y="55.6" width="2" height="1.2"/><rect x="517" y="61.8" width="2" height="1.2"/></g>
<path d="M517.5 55.4L527.2 60.8" stroke="#444" stroke-width="1" fill="none"/>
<!-- icon C -->
<g fill="#000"><rect x="536.5" y="54" width="1.5" height="12.6"/><rect x="544.2" y="54" width="1.5" height="12.6"/><rect x="534" y="57.3" width="14.2" height="1.3"/><rect x="534" y="61" width="14.2" height="1.3"/></g>
<!-- icon D -->
<path d="M555 54.8L562 59.5" stroke="#111" stroke-width="1.2" fill="none"/><path d="M565.3 57.6L564.8 64L560.2 66.2L562.3 61.5L559.8 59.8Z" fill="#000"/>
<!-- icon E -->
<path d="M582 61.6L594.4 55.4M583.8 65.4L595.6 58.5" stroke="#909090" stroke-width="1.6" fill="none"/>
<!-- icon F X -->
<path d="M605.5 55L614.5 64.4M614.5 55L605.5 64.4" stroke="#929292" stroke-width="3" fill="none"/>
<!-- x all -->
<path d="M625.4 53.8L629.6 58.2M629.6 53.8L625.4 58.2" stroke="#8a8a8a" stroke-width="1.5" fill="none"/>
<text x="628.6" y="65.8" font-family="Liberation Sans, sans-serif" font-size="9" fill="#8a8a8a">all</text>
<!-- printer -->
<g><rect x="654.5" y="55.5" width="7" height="5.5" fill="#fff" stroke="#000" stroke-width="1.2"/><rect x="656.2" y="57.2" width="3.6" height="1" fill="#000"/><rect x="656.2" y="59" width="3.6" height="1" fill="#000"/>
<path d="M652.5 60V64.2H663.3V60" fill="none" stroke="#000" stroke-width="1.6"/><rect x="652" y="63" width="11.8" height="1.8" fill="#000"/><rect x="652.5" y="64.8" width="11.5" height="1" fill="#5c8ad6"/></g>
<!-- preview -->
<g><path d="M675 54.5H680.5L683.5 57.5V66.5H675Z" fill="#fafafa" stroke="#8c8c8c" stroke-width="1"/><circle cx="680.3" cy="61.5" r="2.8" fill="#fff" stroke="#222" stroke-width="1.2"/><path d="M682.4 63.6L685.4 66.6" stroke="#222" stroke-width="1.6"/></g>
<!-- zoom in -->
<circle cx="706.8" cy="57.8" r="2.8" fill="#fafafa" stroke="#333" stroke-width="1.1"/><path d="M709 60L712.6 63.2" stroke="#333" stroke-width="1.5"/>
<path d="M700 63.3H705M702.5 60.8V65.8" stroke="#ff6a00" stroke-width="1.3"/>
<!-- zoom out -->
<circle cx="727.8" cy="57.8" r="2.8" fill="#fafafa" stroke="#333" stroke-width="1.1"/><path d="M730 60L733.4 63.2" stroke="#333" stroke-width="1.5"/>
<path d="M721.2 63.3H726" stroke="#3c6fd0" stroke-width="1.3"/>
<!-- fit -->
<rect x="741.3" y="54" width="13.8" height="1.6" fill="#858585"/><rect x="741.3" y="64.6" width="13.8" height="1.6" fill="#858585"/>
<path d="M748.2 56.6L750.4 59.2H746Z" fill="#9a9a9a"/><path d="M748.2 63.6L750.4 61H746Z" fill="#9a9a9a"/>
<!-- pin -->
<path d="M1021 55.6L1024.5 57.8L1028 55.6L1027.2 59.7L1028 63.8L1024.5 61.6L1021 63.8L1022 59.7Z" fill="#eef0f2" stroke="#7a8088" stroke-width="1"/><path d="M1018.5 59H1021.5" stroke="#8a95a5" stroke-width="1"/>
<!-- search magnifier -->
<circle cx="41.8" cy="684.5" r="3.3" fill="none" stroke="#555" stroke-width="1.2"/><path d="M39.4 687L35.4 691.3" stroke="#555" stroke-width="1.5"/>
<rect x="41" y="692" width="1" height="1" fill="#555"/><rect x="43" y="692" width="1" height="1" fill="#555"/><rect x="45" y="692" width="1" height="1" fill="#555"/>
</svg>

<svg class="abs" style="left:0;top:0" width="1040" height="708" viewBox="0 0 1040 708"><text transform="translate(105.77,64.9) scale(0.779,1)" class="tbt">T</text>
<path d="M129.75 55.5H131.00V64.9H129.75V57.6L127.90 59.3V58.1L129.75 55.5Z" class="tbp"/>
<text transform="translate(147.37,64.9) scale(0.961,1)" class="tbt">5</text>
<path d="M167.65 55.5H168.90V64.9H167.65V57.6L165.60 59.3V58.1L167.65 55.5Z" class="tbp"/>
<text transform="translate(170.83,64.9) scale(1.031,1)" class="tbt">0</text>
<path d="M188.75 55.5H190.00V64.9H188.75V57.6L186.90 59.3V58.1L188.75 55.5Z" class="tbp"/>
<text transform="translate(191.97,64.9) scale(0.969,1)" class="tbt">5</text>
<text transform="translate(207.26,64.9) scale(0.898,1)" class="tbt">3</text>
<text transform="translate(213.93,64.9) scale(0.862,1)" class="tbt">0</text>
<path d="M230.65 55.5H231.90V64.9H230.65V57.6L228.75 59.3V58.1L230.65 55.5Z" class="tbp"/>
<text transform="translate(233.10,64.9) scale(0.822,1)" class="tbt">H</text>
<text transform="translate(248.77,64.9) scale(0.903,1)" class="tbt">2</text>
<text transform="translate(255.43,64.9) scale(0.743,1)" class="tbt">H</text>
<text transform="translate(270.74,64.9) scale(0.861,1)" class="tbt">4</text>
<text transform="translate(276.98,64.9) scale(0.704,1)" class="tbt">H</text>
<text transform="translate(291.35,64.9) scale(0.921,1)" class="tbt">8</text>
<text transform="translate(297.99,64.9) scale(0.691,1)" class="tbt">H</text>
<text transform="translate(314.58,64.9) scale(0.932,1)" class="tbt">D</text>
<text transform="translate(334.96,64.9) scale(0.882,1)" class="tbt">W</text>
<text transform="translate(355.80,64.9) scale(1.000,1)" class="tbt">M</text></svg>
</body></html>
